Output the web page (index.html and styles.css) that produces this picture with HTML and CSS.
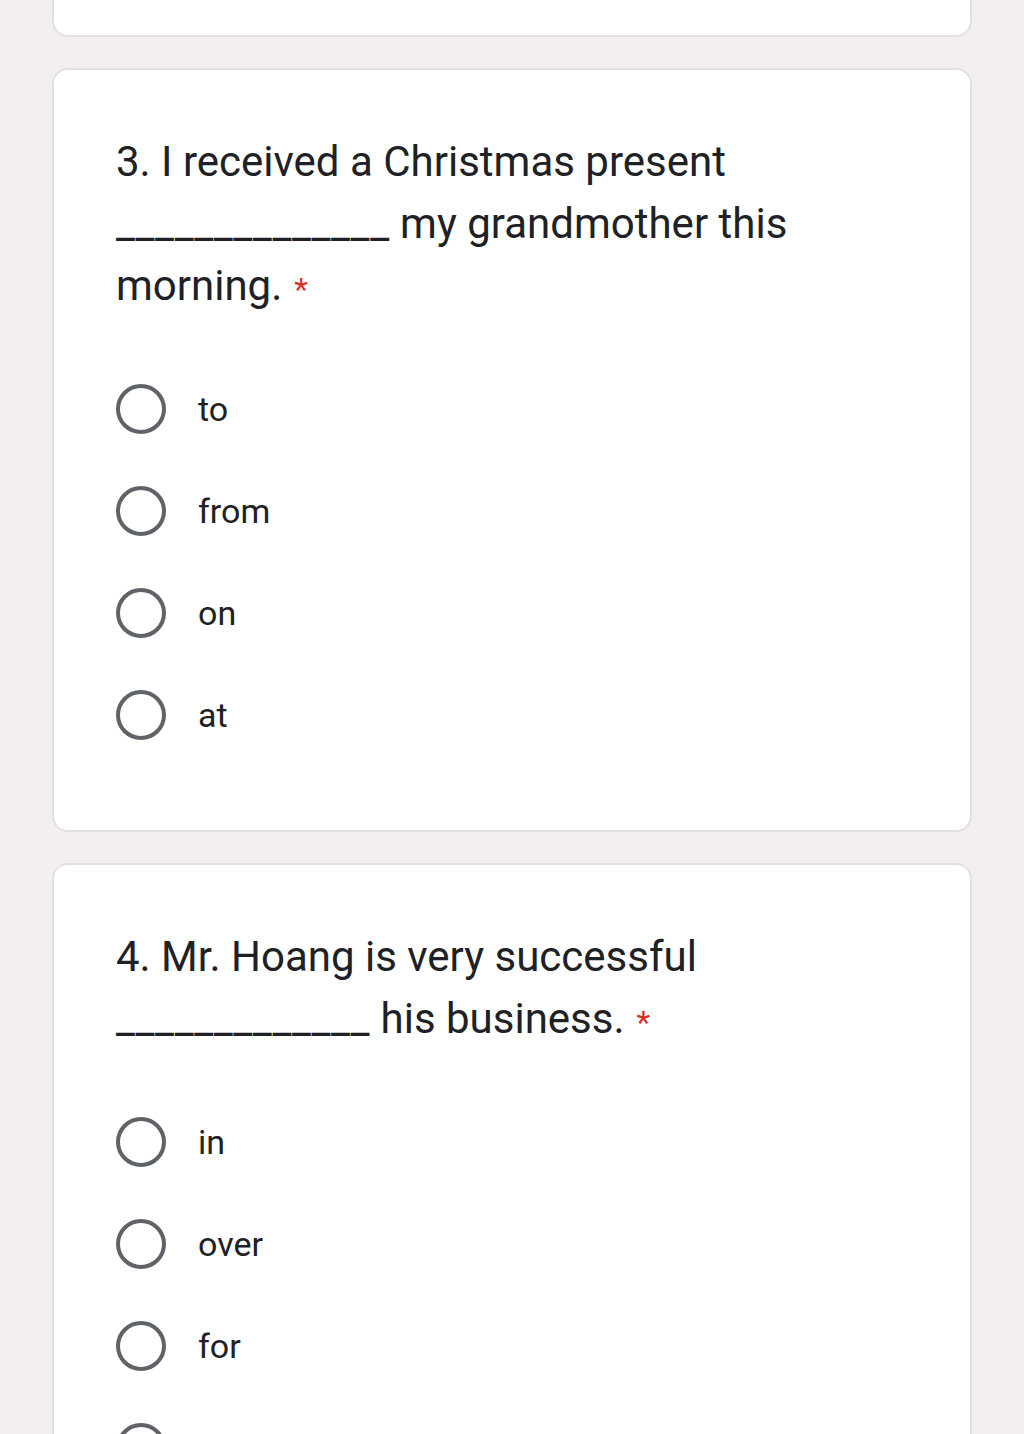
FILE: index.html
```html
<!DOCTYPE html>
<html>
<head>
<meta charset="utf-8">
<link rel="stylesheet" href="styles.css">
</head>
<body>
<div class="page">
  <div class="card card-top"></div>

  <div class="card">
    <div class="question">3. I received a Christmas present <span class="blank">______________</span> my grandmother this morning.<span class="req">*</span></div>
    <div class="options">
      <div class="option"><span class="radio"></span><span class="label">to</span></div>
      <div class="option"><span class="radio"></span><span class="label">from</span></div>
      <div class="option"><span class="radio"></span><span class="label">on</span></div>
      <div class="option"><span class="radio"></span><span class="label">at</span></div>
    </div>
  </div>

  <div class="card">
    <div class="question">4. Mr. Hoang is very successful <span class="blank">_____________</span> his business.<span class="req">*</span></div>
    <div class="options">
      <div class="option"><span class="radio"></span><span class="label">in</span></div>
      <div class="option"><span class="radio"></span><span class="label">over</span></div>
      <div class="option"><span class="radio"></span><span class="label">for</span></div>
      <div class="option"><span class="radio"></span><span class="label">with</span></div>
    </div>
  </div>
</div>
</body>
</html>
```

FILE: styles.css
```css
html, body {
  margin: 0;
  padding: 0;
  background: #f3eef0;
}
body {
  height: 1434px;
  overflow: hidden;
}
.page {
  display: flex;
  flex-direction: column;
  gap: 31px;
  padding: 0 52px;
}
.card {
  background: #ffffff;
  border: 2px solid #e2e0e1;
  border-radius: 16px;
  padding: 61px 62px 90px 62px;
}
.card-top {
  height: 35px;
  padding: 0;
  border-top: none;
  border-top-left-radius: 0;
  border-top-right-radius: 0;
}
.question {
  font-family: Roboto, "Liberation Sans", sans-serif;
  font-size: 42px;
  line-height: 62px;
  color: #202124;
  width: 700px;
}
.blank {
  letter-spacing: 0.6px;
}
.req {
  color: #d93025;
  margin-left: 12px;
  font-size: 32px;
}
.options {
  display: flex;
  flex-direction: column;
  gap: 52px;
  margin-top: 64px;
}
.option {
  display: flex;
  align-items: center;
  height: 50px;
}
.radio {
  width: 42px;
  height: 42px;
  border: 4px solid #5f6368;
  border-radius: 50%;
  flex: none;
}
.label {
  margin-left: 32px;
  font-family: Roboto, "Liberation Sans", sans-serif;
  font-size: 34px;
  color: #202124;
}
```
